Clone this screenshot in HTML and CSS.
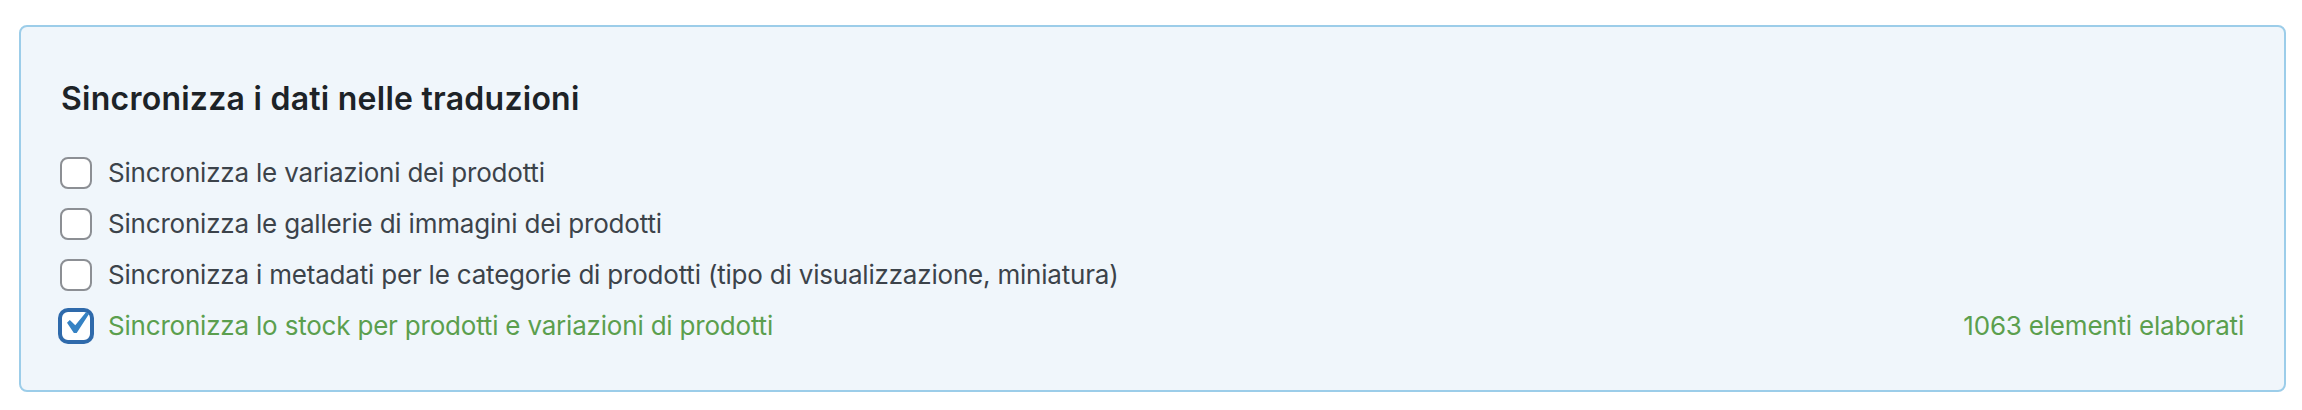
FILE: index.html
```html
<!DOCTYPE html>
<html lang="it">
<head>
    <meta charset="UTF-8">
    <meta name="viewport" content="width=device-width, initial-scale=1.0">
    <title>Sincronizza i dati nelle traduzioni</title>
    <link rel="stylesheet" href="styles.css">
</head>
<body>
    <div class="sync-panel">
        <h2 class="sync-title">Sincronizza i dati nelle traduzioni</h2>
        <ul class="sync-list">
            <li class="sync-item">
                <label class="sync-option">
                    <span class="check-box"></span>
                    <span>Sincronizza le variazioni dei prodotti</span>
                </label>
            </li>
            <li class="sync-item">
                <label class="sync-option">
                    <span class="check-box"></span>
                    <span>Sincronizza le gallerie di immagini dei prodotti</span>
                </label>
            </li>
            <li class="sync-item">
                <label class="sync-option">
                    <span class="check-box"></span>
                    <span>Sincronizza i metadati per le categorie di prodotti (tipo di visualizzazione, miniatura)</span>
                </label>
            </li>
            <li class="sync-item done">
                <label class="sync-option">
                    <span class="check-box checked focused">
                        <svg class="check-mark" viewBox="5.78 4.89 10.39 9.32" preserveAspectRatio="none" aria-hidden="true">
                            <path d="M14.83 4.89l1.34.94-5.81 8.38H9.02L5.78 9.67l1.34-1.25 2.57 2.4z" fill="#3582c4"/>
                        </svg>
                    </span>
                    <span>Sincronizza lo stock per prodotti e variazioni di prodotti</span>
                </label>
                <span class="sync-count">1063 elementi elaborati</span>
            </li>
        </ul>
    </div>
</body>
</html>
```

FILE: styles.css
```css
/* Global Styles */
body {
    font-family: 'Inter', 'Roboto', sans-serif;
    margin: 0;
    padding: 0;
    background-color: #fff;
    color: #3c434a;
}

/* Panel */
.sync-panel {
    margin: 25px 16px 0 19px;
    padding: 52px 40px 48px 39px;
    background-color: #f0f6fb;
    border: 2px solid #9ccde9;
    border-radius: 8px;
}

.sync-title {
    margin: 0 0 38px 1px;
    font-size: 32px;
    line-height: 40px;
    letter-spacing: 0.25px;
    font-weight: 600;
    color: #1d2327;
}

/* Options */
.sync-list {
    list-style: none;
    margin: 0;
    padding: 0;
    display: flex;
    flex-direction: column;
    gap: 19px;
}

.sync-item {
    display: flex;
    align-items: center;
    justify-content: space-between;
    height: 32px;
    font-size: 26px;
    line-height: 32px;
    letter-spacing: -0.2px;
}

.sync-option {
    display: flex;
    align-items: center;
    gap: 16px;
}

.check-box {
    position: relative;
    box-sizing: border-box;
    width: 32px;
    height: 32px;
    flex-shrink: 0;
    background-color: #fff;
    border: 2px solid #8c8f94;
    border-radius: 8px;
}

.check-box.focused {
    border-color: #2f6aab;
    box-shadow: 0 0 0 2px #2f6aab;
}

.check-mark {
    position: absolute;
    left: 5px;
    top: 0;
    width: 22px;
    height: 21px;
}

/* Finished row */
.done {
    color: #5b9f4e;
}

.sync-count {
    color: #5b9f4e;
}
```
